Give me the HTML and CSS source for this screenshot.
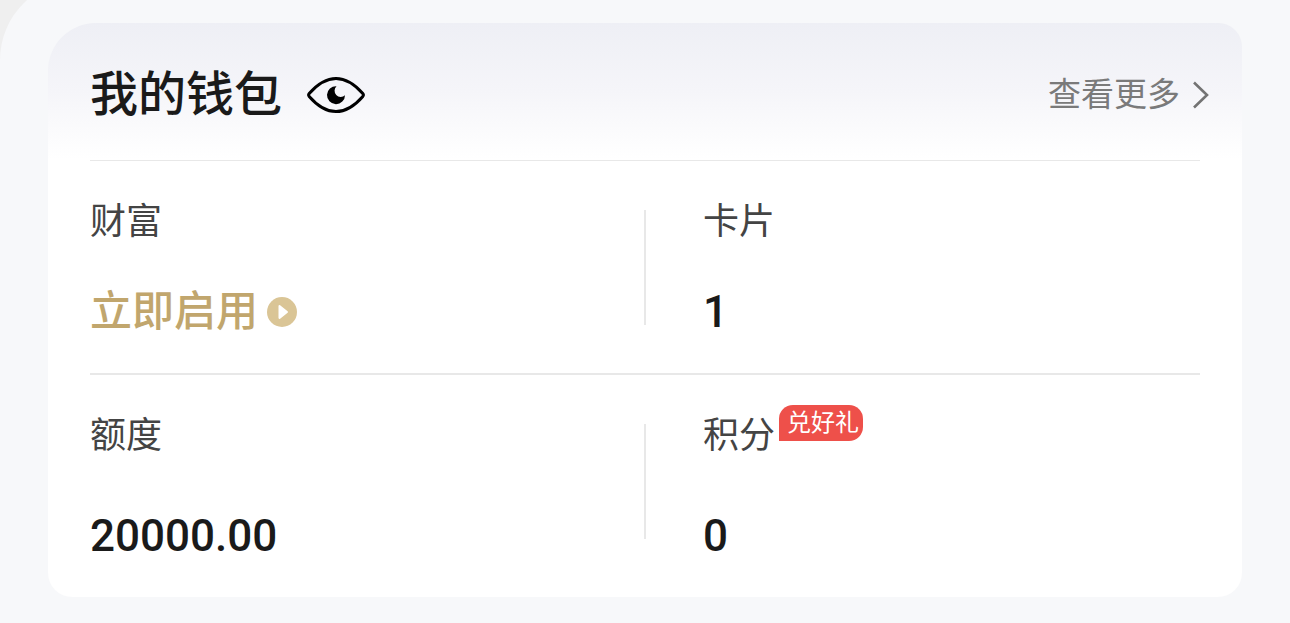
FILE: index.html
```html
<!DOCTYPE html>
<html lang="zh-CN">
<head>
<meta charset="utf-8">
<meta name="viewport" content="width=device-width, initial-scale=1">
<title>我的钱包</title>
<link rel="stylesheet" href="styles.css">
</head>
<body>
<main class="panel">
  <section class="wallet">
    <header class="wallet-head">
      <h1 class="title">我的钱包</h1>
      <button class="eye" type="button" aria-label="显示或隐藏金额">
        <svg width="60" height="38" viewBox="0 0 60 38" fill="none">
          <path d="M3.200 17.600C12 7.500 20 2.500 30 2.500S48 7.500 56.800 17.600Q58 19 56.800 20.400C48 30.500 40 35.500 30 35.500S12 30.500 3.200 20.400Q2 19 3.200 17.600Z" stroke="#000" stroke-width="3"/>
          <path d="M30.500 10.200A9 9 0 1 0 39 19.200A5.800 5.800 0 0 1 30.500 10.200Z" fill="#000"/>
        </svg>
      </button>
      <a class="more" href="#">查看更多
        <svg width="18" height="30" viewBox="0 0 18 30" fill="none"><path d="M2 2.500L15 15L2 27.500" stroke="#737373" stroke-width="2.600"/></svg>
      </a>
    </header>
    <div class="row">
      <div class="cell">
        <h2 class="label">财富</h2>
        <a class="enable" href="#">立即启用
          <svg width="30" height="30" viewBox="0 0 30 30"><circle cx="15" cy="15" r="15" fill="#dac596"/><path d="M12.500 9L20 15L12.500 21Z" fill="#fff" stroke="#fff" stroke-width="2" stroke-linejoin="round"/></svg>
        </a>
      </div>
      <div class="cell">
        <h2 class="label">卡片</h2>
        <p class="value">1</p>
      </div>
    </div>
    <div class="row row-tall">
      <div class="cell">
        <h2 class="label">额度</h2>
        <p class="value">20000.00</p>
      </div>
      <div class="cell">
        <h2 class="label">积分<span class="badge">兑好礼</span></h2>
        <p class="value">0</p>
      </div>
    </div>
  </section>
</main>
</body>
</html>
```
FILE: styles.css
```css
* {
  box-sizing: border-box;
}

body {
  margin: 0;
  background: #efefef;
  color: #1a1a1a;
  font-family: Roboto, "Noto Sans CJK SC", sans-serif;
  overflow-x: hidden;
}

h1, h2, p {
  margin: 0;
}

a {
  color: inherit;
  text-decoration: none;
}

svg {
  display: block;
  flex: none;
}

/* The sheet starts above the visible area */
.panel {
  display: flow-root;
  margin-top: -20px;
  padding: 43px 48px 26px;
  border-top-left-radius: 80px;
  background: #f7f8fa;
}

.wallet {
  padding: 0 42px;
  border-radius: 48px 24px 24px 24px;
  background: #fff linear-gradient(#eeeff5, #f5f5f9 50%, #fff) no-repeat top / 100% 136px;
}

.wallet-head {
  display: flex;
  align-items: center;
  height: 138px;
  padding-top: 6px;
  margin-right: -10px;
}

.title {
  font-size: 48px;
  line-height: 72px;
  font-weight: 500;
}

.eye {
  margin-left: 24px;
  padding: 0;
  border: 0;
  background: none;
  cursor: pointer;
}

.more {
  display: flex;
  align-items: center;
  gap: 12px;
  margin-left: auto;
  color: #7a7a7a;
  font-size: 33px;
  line-height: 48px;
}

.row {
  display: grid;
  grid-template-columns: 1fr 1fr;
  padding: 32px 0;
  border-top: 2px solid #e8e8e8;
}

.wallet-head + .row {
  border-top-width: 1px;
  margin-top: -1px;
}

.cell {
  display: flex;
  flex-direction: column;
  align-items: flex-start;
  gap: 36px;
  height: 148px;
  padding-top: 2px;
}

.row-tall .cell {
  gap: 46px;
  height: 158px;
}

.cell + .cell {
  margin-left: -1px;
  padding-left: 59px;
  background: linear-gradient(#e8e8e8, #e8e8e8) no-repeat left 17px / 2px 115px;
}

.label {
  display: flex;
  color: #444;
  font-size: 36px;
  line-height: 54px;
  font-weight: 400;
}

.badge {
  align-self: flex-start;
  margin: -4px 0 0 4px;
  padding: 0 4px 0 8px;
  border-radius: 14px 14px 14px 0;
  background: #ee504a;
  color: #fff;
  font-size: 24px;
  line-height: 36px;
}

.value {
  font-size: 44px;
  line-height: 54px;
  font-weight: 500;
}

.enable {
  display: flex;
  align-items: center;
  gap: 9px;
  color: #c1a66d;
  font-size: 42px;
  line-height: 54px;
  font-weight: 500;
}
```
